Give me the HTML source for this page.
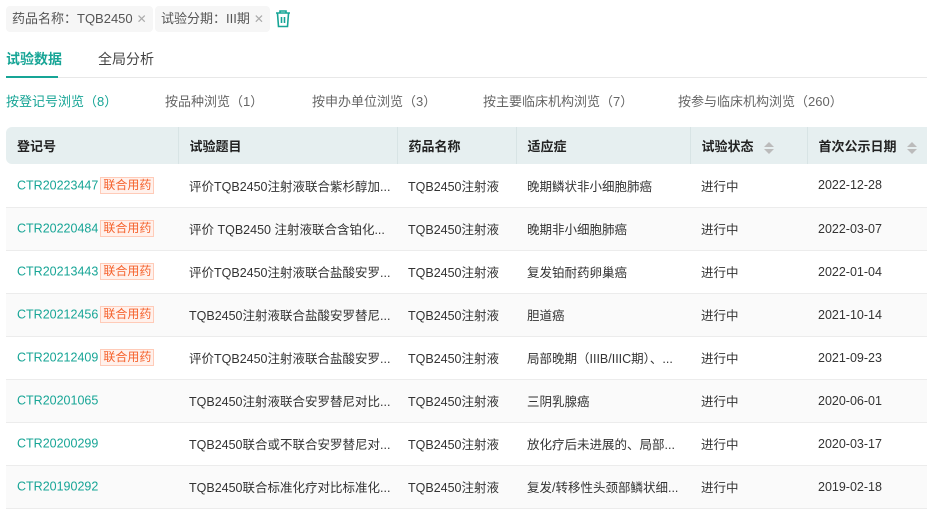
<!DOCTYPE html>
<html><head><meta charset="utf-8"><style>
*{margin:0;padding:0;box-sizing:border-box}
body{width:927px;height:504px;overflow:hidden;background:#fff;font-family:"Liberation Sans","Noto Sans CJK SC",sans-serif;font-size:13px;color:#333;position:relative}
.chip{position:absolute;top:6px;height:26px;background:#f6f6f6;border-radius:4px;font-size:13px;color:#555;line-height:26px;padding:0 6px;white-space:nowrap}
.chip .x{color:#aaa;margin-left:4px;font-size:12px}
.tab{position:absolute;top:49px;font-size:14px}
.sub{position:absolute;top:91px;font-size:13px;color:#666}
table{position:absolute;left:6px;top:127px;width:921px;border-collapse:collapse;table-layout:fixed}
th{background:#e6eff0;height:37px;text-align:left;font-weight:bold;font-size:13px;color:#222;padding-left:11px;border-left:1px solid #d8e4e5}
th:first-child{border-left:none;border-radius:6px 0 0 6px}
td{height:43px;padding-left:11px;font-size:12.5px;color:#333;border-bottom:1px solid #ececec;white-space:nowrap;overflow:hidden;vertical-align:middle}
tr:nth-child(odd) td{background:#fafafa}
.id{color:#17a596;vertical-align:middle}
.tag{display:inline-block;vertical-align:middle;color:#f5622d;background:#fff1ec;border:1px solid #ffcbb8;font-size:12px;line-height:15px;padding:0 2px;margin-left:2px}
.sort{display:inline-block;vertical-align:middle;margin-left:10px}
.sort i{display:block;width:0;height:0;border-left:5px solid transparent;border-right:5px solid transparent}
.up{border-bottom:5px solid #bbb;margin-bottom:2px}.dn{border-top:5px solid #bbb}
</style></head><body>
<div class="chip" style="left:6px">药品名称：TQB2450<span class="x">✕</span></div>
<div class="chip" style="left:155px">试验分期：III期<span class="x">✕</span></div>
<svg style="position:absolute;left:275px;top:10px" width="16" height="18" viewBox="0 0 16 18"><path d="M1 3h14M5 3V1h6v2M2.5 3.5l1 13h9l1-13M6.5 7v6M9.5 7v6" fill="none" stroke="#17a596" stroke-width="1.6"/></svg>
<div class="tab" style="left:6px;color:#17a596;font-weight:bold">试验数据</div>
<div class="tab" style="left:98px;color:#444">全局分析</div>
<div style="position:absolute;left:6px;right:0;top:77px;height:1px;background:#e8e8e8"></div>
<div style="position:absolute;left:6px;width:52px;top:76px;height:2px;background:#17a596"></div>
<div class="sub" style="left:6px;color:#17a596">按登记号浏览（8）</div>
<div class="sub" style="left:165px">按品种浏览（1）</div>
<div class="sub" style="left:312px">按申办单位浏览（3）</div>
<div class="sub" style="left:483px">按主要临床机构浏览（7）</div>
<div class="sub" style="left:678px">按参与临床机构浏览（260）</div>
<table>
<colgroup><col style="width:172px"><col style="width:219px"><col style="width:119px"><col style="width:174px"><col style="width:117px"><col style="width:120px"></colgroup>
<tr><th>登记号</th><th>试验题目</th><th>药品名称</th><th>适应症</th><th>试验状态<span class="sort"><i class="up"></i><i class="dn"></i></span></th><th>首次公示日期<span class="sort"><i class="up"></i><i class="dn"></i></span></th></tr>
<tr><td><span class="id">CTR20223447</span><span class="tag">联合用药</span></td><td>评价TQB2450注射液联合紫杉醇加...</td><td>TQB2450注射液</td><td>晚期鳞状非小细胞肺癌</td><td>进行中</td><td>2022-12-28</td></tr>
<tr><td><span class="id">CTR20220484</span><span class="tag">联合用药</span></td><td>评价 TQB2450 注射液联合含铂化...</td><td>TQB2450注射液</td><td>晚期非小细胞肺癌</td><td>进行中</td><td>2022-03-07</td></tr>
<tr><td><span class="id">CTR20213443</span><span class="tag">联合用药</span></td><td>评价TQB2450注射液联合盐酸安罗...</td><td>TQB2450注射液</td><td>复发铂耐药卵巢癌</td><td>进行中</td><td>2022-01-04</td></tr>
<tr><td><span class="id">CTR20212456</span><span class="tag">联合用药</span></td><td>TQB2450注射液联合盐酸安罗替尼...</td><td>TQB2450注射液</td><td>胆道癌</td><td>进行中</td><td>2021-10-14</td></tr>
<tr><td><span class="id">CTR20212409</span><span class="tag">联合用药</span></td><td>评价TQB2450注射液联合盐酸安罗...</td><td>TQB2450注射液</td><td>局部晚期（IIIB/IIIC期）、...</td><td>进行中</td><td>2021-09-23</td></tr>
<tr><td><span class="id">CTR20201065</span></td><td>TQB2450注射液联合安罗替尼对比...</td><td>TQB2450注射液</td><td>三阴乳腺癌</td><td>进行中</td><td>2020-06-01</td></tr>
<tr><td><span class="id">CTR20200299</span></td><td>TQB2450联合或不联合安罗替尼对...</td><td>TQB2450注射液</td><td>放化疗后未进展的、局部...</td><td>进行中</td><td>2020-03-17</td></tr>
<tr><td><span class="id">CTR20190292</span></td><td>TQB2450联合标准化疗对比标准化...</td><td>TQB2450注射液</td><td>复发/转移性头颈部鳞状细...</td><td>进行中</td><td>2019-02-18</td></tr>
</table>
</body></html>
